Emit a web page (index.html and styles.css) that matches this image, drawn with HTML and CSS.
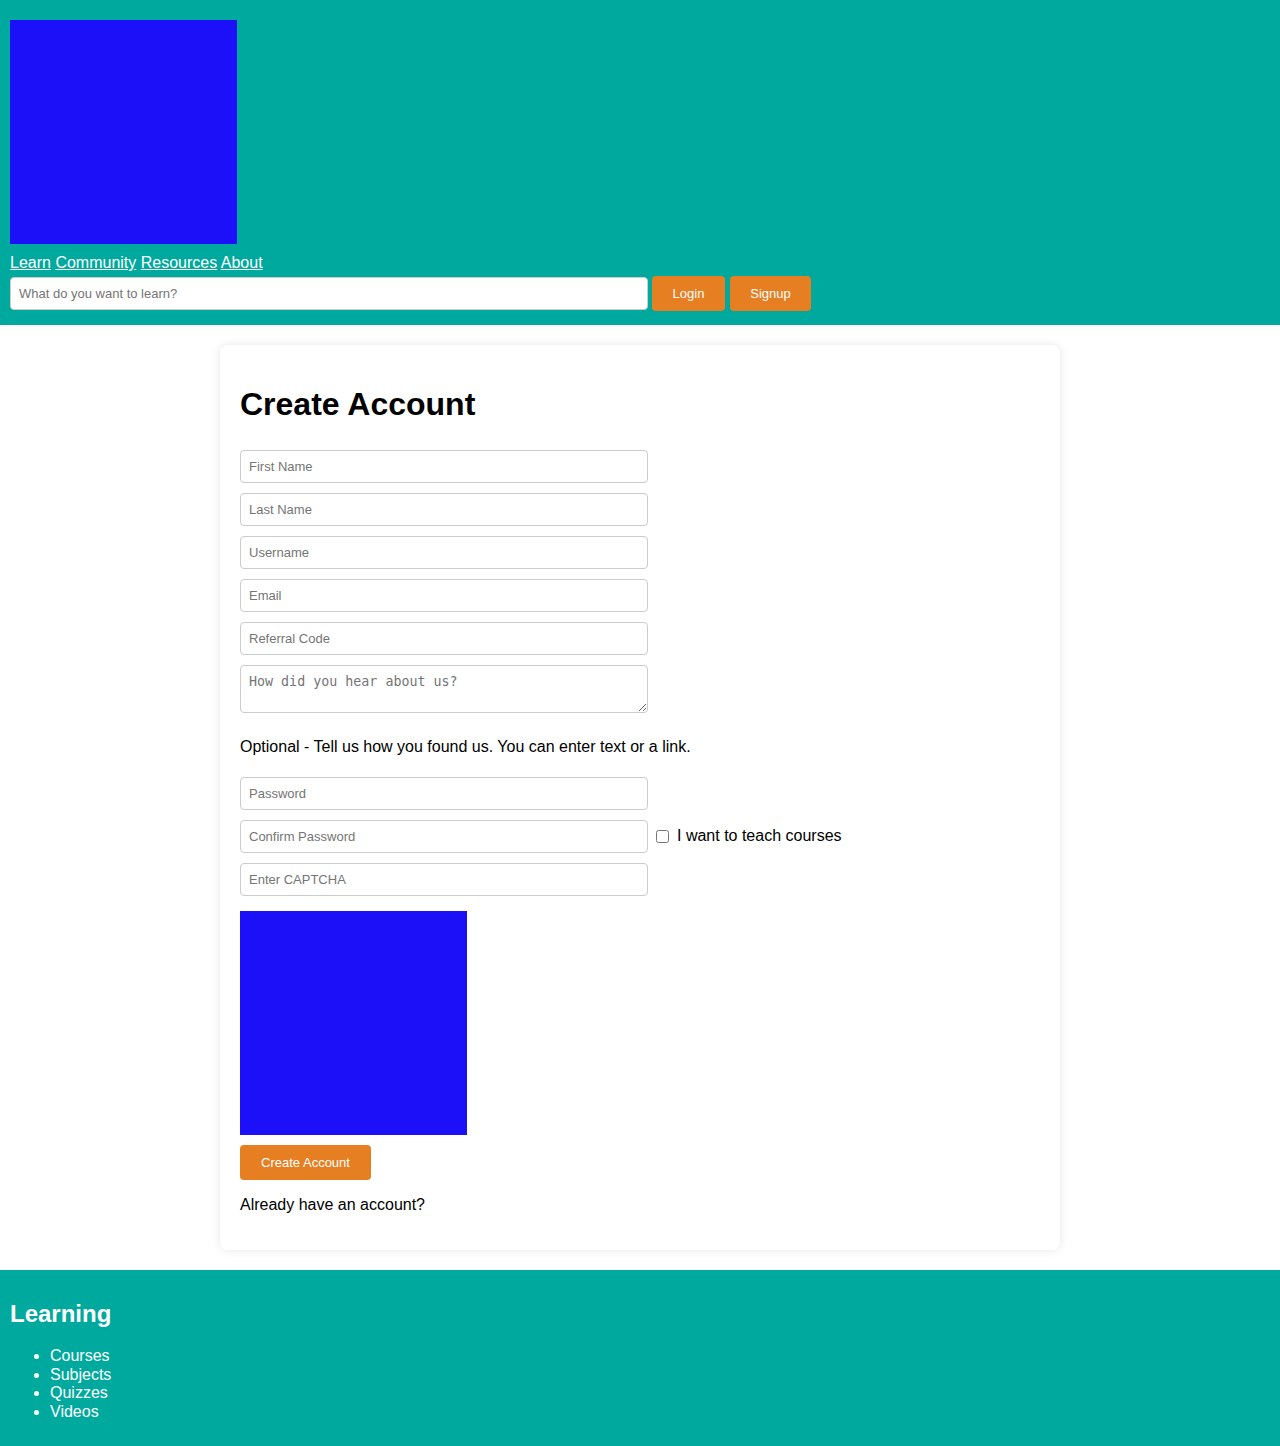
FILE: index.html
```html
<!DOCTYPE html>
<html lang="en">
<head>
<meta charset="utf-8">
<title>Create Account</title>
<link rel="stylesheet" href="styles.css">
</head>
<body>
<header class="site-header">
  <div class="logo" aria-label="Logo"></div>
  <nav class="main-nav">
    <a href="#">Learn</a> <a href="#">Community</a> <a href="#">Resources</a> <a href="#">About</a>
  </nav>
  <div class="search-row">
    <input class="search-input" type="text" placeholder="What do you want to learn?">
    <button class="btn btn-login">Login</button>
    <button class="btn btn-signup">Signup</button>
  </div>
</header>

<main class="card">
  <h1 class="card-title">Create Account</h1>
  <form class="signup-form">
    <input class="field" type="text" placeholder="First Name">
    <input class="field" type="text" placeholder="Last Name">
    <input class="field" type="text" placeholder="Username">
    <input class="field" type="email" placeholder="Email">
    <input class="field" type="text" placeholder="Referral Code">
    <textarea class="field field-area" placeholder="How did you hear about us?"></textarea>
    <p class="hint">Optional - Tell us how you found us. You can enter text or a link.</p>
    <input class="field" type="password" placeholder="Password">
    <div class="confirm-row">
      <input class="field" type="password" placeholder="Confirm Password">
      <label class="teach"><input type="checkbox" class="teach-box"> I want to teach courses</label>
    </div>
    <input class="field" type="text" placeholder="Enter CAPTCHA">
    <div class="captcha" aria-label="CAPTCHA image"></div>
    <button class="btn btn-create" type="button">Create Account</button>
    <p class="already">Already have an account?</p>
  </form>
</main>

<footer class="site-footer">
  <h2 class="footer-title">Learning</h2>
  <ul class="footer-list">
    <li>Courses</li>
    <li>Subjects</li>
    <li>Quizzes</li>
    <li>Videos</li>
  </ul>
</footer>
</body>
</html>
```

FILE: styles.css
```css
* { box-sizing: border-box; }

body {
  margin: 0;
  font-family: "Liberation Sans", Arial, sans-serif;
  color: #000;
  background: #fff;
}

.site-header {
  background: #00a99d;
  padding: 20px 10px 14px;
}

.logo {
  width: 227px;
  height: 224px;
  background: #1c10f9;
}

.main-nav {
  margin-top: 10px;
  font-size: 16px;
  line-height: 18.4px;
}

.main-nav a {
  color: #fff;
  text-decoration: underline;
}

.search-row {
  margin-top: 4px;
  display: flex;
  align-items: center;
}

.search-input {
  width: 638px;
  height: 33px;
  padding: 8px;
  font-family: "Liberation Sans", Arial, sans-serif;
  font-size: 13px;
  border: 1px solid #ccc;
  border-radius: 4px;
  background: #fff;
  margin-right: 4px;
}

.btn {
  background: #e67e22;
  color: #fff;
  border: none;
  border-radius: 4px;
  padding: 10px 0;
  height: 35px;
  font-family: "Liberation Sans", Arial, sans-serif;
  font-size: 13px;
  line-height: 15px;
  text-align: center;
  cursor: pointer;
}

.btn-login { width: 73px; }
.btn-signup { width: 81px; margin-left: 5px; }

.card {
  display: block;
  max-width: 840px;
  margin: 20px auto;
  padding: 20px;
  background: #fff;
  border-radius: 8px;
  box-shadow: 0 0 10px rgba(0, 0, 0, 0.1);
}

.card-title {
  font-size: 32px;
  font-weight: bold;
  line-height: 36.8px;
  margin: 21px 0 27px;
}

.signup-form {
  display: flex;
  flex-direction: column;
  align-items: flex-start;
  gap: 10px;
}

.field {
  width: 408px;
  height: 33px;
  padding: 8px;
  font-family: "Liberation Sans", Arial, sans-serif;
  font-size: 13px;
  border: 1px solid #ccc;
  border-radius: 4px;
  background: #fff;
  margin: 0;
}

.field-area {
  height: 48px;
  font-family: "DejaVu Sans Mono", "Liberation Mono", monospace;
  font-size: 13.33px;
  line-height: 15px;
  resize: both;
}

.hint {
  font-size: 16px;
  line-height: 18.4px;
  margin: 14.5px 0 11px;
}

.confirm-row {
  display: flex;
  align-items: center;
}

.teach {
  display: flex;
  align-items: center;
  font-size: 16px;
  line-height: 18.4px;
  margin-left: 8px;
}

.teach-box {
  width: 13px;
  height: 13px;
  margin: 0 8px 0 0;
}

.captcha {
  width: 227px;
  height: 224px;
  background: #1c10f9;
  margin-top: 5px;
}

.btn-create {
  width: 131px;
}

.already {
  font-size: 16px;
  line-height: 18.4px;
  margin: 6px 0 15.5px;
}

.site-footer {
  background: #00a99d;
  color: #fff;
  padding: 10px;
}

.footer-title {
  font-size: 24px;
  line-height: 27.6px;
  margin: 19.92px 0;
}

.footer-list {
  margin: 19.92px 0;
  padding-left: 40px;
  font-size: 16px;
  line-height: 18.4px;
}
```
